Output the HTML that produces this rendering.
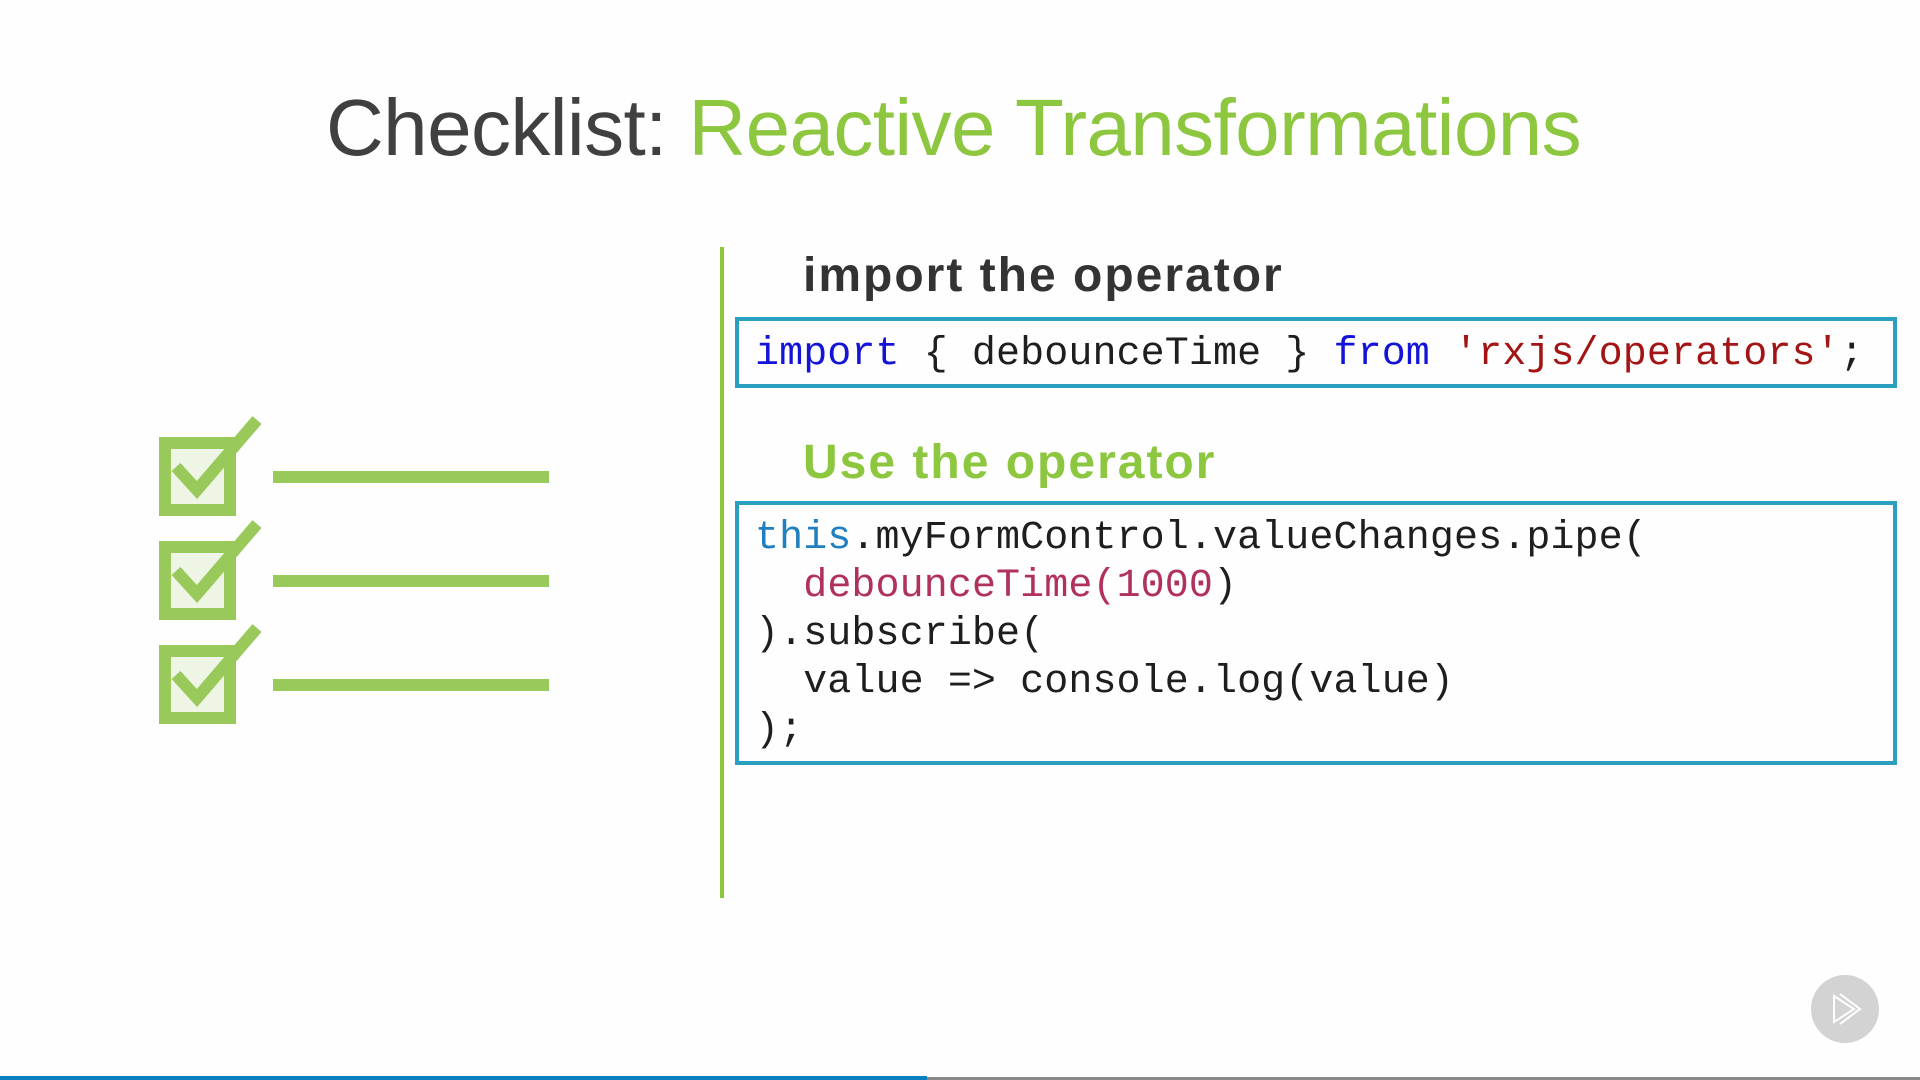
<!DOCTYPE html>
<html><head><meta charset="utf-8"><style>
html,body{margin:0;padding:0;width:1920px;height:1080px;overflow:hidden;background:#fefefe;position:relative;font-family:"Liberation Sans",sans-serif}
.a{position:absolute;white-space:pre}
.title{left:326px;top:80px;font-size:80px;color:#404040;letter-spacing:-0.6px;line-height:96px}
.title span{color:#8dc63f}
.h{font-size:48px;font-weight:bold;line-height:56px;left:803px;letter-spacing:2px}
.box{position:absolute;left:735px;width:1154px;border:4px solid #2a9fbf;box-sizing:content-box}
.code{font-family:"Liberation Mono",monospace;font-size:40px;color:#1e1e1e;line-height:48px;left:755px;letter-spacing:0.1px}
.kw{color:#1414d8}.str{color:#a31515}.th{color:#1f7fbf}.fn{color:#b0305e}
</style></head><body>
<div class="a title">Checklist: <span>Reactive Transformations</span></div>
<div style="position:absolute;left:720px;top:247px;width:4px;height:651px;background:#8dc63f"></div>
<div class="a h" style="top:248px;color:#333">import the operator</div>
<div class="box" style="top:317px;height:63px"></div>
<div class="a code" style="top:331px"><span class="kw">import</span> { debounceTime } <span class="kw">from</span> <span class="str">'rxjs/operators'</span>;</div>
<div class="a h" style="top:435px;color:#8dc63f">Use the operator</div>
<div class="box" style="top:501px;height:256px"></div>
<div class="a code" style="top:515px"><span class="th">this</span>.myFormControl.valueChanges.pipe(
  <span class="fn">debounceTime(1000</span>)
).subscribe(
  value =&gt; console.log(value)
);</div>
<svg class="a" style="left:0;top:0" width="720" height="900">
<g fill="none" stroke="#98c95a" stroke-width="12">
<g>
<rect x="165" y="443" width="65" height="67" fill="#eef5e4"/>
<polyline points="176,467 197,490 257,420"/>
<line x1="273" y1="477" x2="549" y2="477"/>
</g>
<g transform="translate(0,104)">
<rect x="165" y="443" width="65" height="67" fill="#eef5e4"/>
<polyline points="176,467 197,490 257,420"/>
<line x1="273" y1="477" x2="549" y2="477"/>
</g>
<g transform="translate(0,208)">
<rect x="165" y="443" width="65" height="67" fill="#eef5e4"/>
<polyline points="176,467 197,490 257,420"/>
<line x1="273" y1="477" x2="549" y2="477"/>
</g>
</g></svg>
<svg class="a" style="left:1810px;top:974px" width="70" height="70">
<circle cx="35" cy="35" r="34" fill="#d3d3d3"/>
<path d="M24 22 L24 48 L44 35 Z" fill="none" stroke="#fff" stroke-width="2"/>
<path d="M30 20 L50 35 L30 50" fill="none" stroke="#fff" stroke-width="2"/>
</svg>
<div style="position:absolute;left:0;top:1077px;width:1920px;height:3px;background:#8a8a8a"></div>
<div style="position:absolute;left:0;top:1076px;width:927px;height:4px;background:#0a7fbf"></div>
</body></html>
